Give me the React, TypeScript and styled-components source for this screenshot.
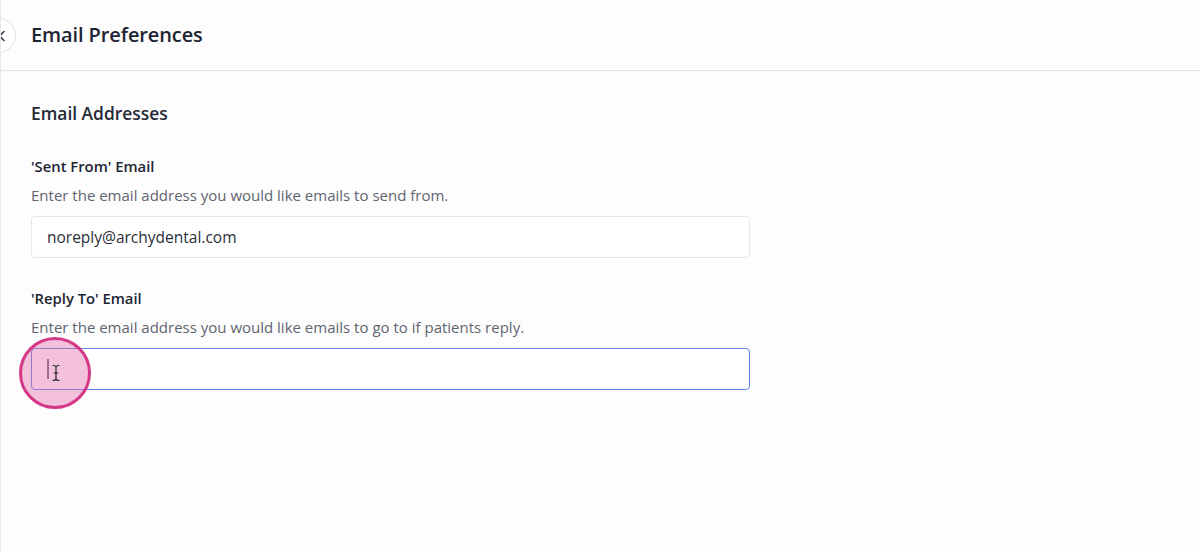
import React from "react";
import styled, { createGlobalStyle } from "styled-components";

const Global = createGlobalStyle`
  html, body { margin: 0; padding: 0; background: #fdfdfd; }
  body { font-family: "Open Sans", "Noto Sans", sans-serif; color: #1f2433; }
  * { box-sizing: border-box; }
`;

const Page = styled.div`
  width: 1200px;
  height: 551px;
  overflow: hidden;
  background: #fdfdfd;
  border-left: 1px solid #e6e7ea;
  display: flex;
  flex-direction: column;
  position: relative;
`;

const Header = styled.header`
  height: 71px;
  flex: none;
  display: flex;
  align-items: center;
  padding-left: 30px;
  border-bottom: 1px solid #e3e4e8;
  background: #fdfdfd;
  position: relative;
`;

const BackButton = styled.button`
  position: absolute;
  left: -20px;
  top: 18px;
  width: 35px;
  height: 35px;
  border-radius: 50%;
  border: 1px solid #dfe1e6;
  background: #ffffff;
  display: flex;
  align-items: center;
  justify-content: flex-end;
  padding: 0 8px 0 0;
  color: #3b3f4a;
`;

const Title = styled.h1`
  margin: 0;
  font-size: 20px;
  font-weight: 600;
  color: #1f2433;
  letter-spacing: -0.1px;
  margin-top: -2px;
`;

const Content = styled.main`
  padding: 30px 30px 0 30px;
  display: flex;
  flex-direction: column;
`;

const SectionTitle = styled.h2`
  margin: 0 0 31px 0;
  font-size: 17.4px;
  font-weight: 600;
  color: #252a36;
  line-height: 24px;
`;

const Field = styled.div`
  display: flex;
  flex-direction: column;
  margin-bottom: 30px;
`;

const Label = styled.label`
  font-size: 14.8px;
  font-weight: 600;
  color: #1f2433;
  line-height: 20px;
  margin-bottom: 9px;
`;

const Help = styled.p`
  margin: 0 0 10px 0;
  font-size: 15px;
  color: #5f6470;
  line-height: 21px;
`;

const InputBox = styled.div<{ $focused?: boolean }>`
  width: 719px;
  height: 42px;
  border-radius: 4px;
  border: 1px solid ${(p) => (p.$focused ? "#5c88e6" : "#e6e7eb")};
  background: #ffffff;
  display: flex;
  align-items: center;
  padding-left: 15px;
  font-size: 15.5px;
  color: #2a2e38;
  position: relative;
`;

const Caret = styled.span`
  width: 1.5px;
  height: 20px;
  background: #7a6f88;
  display: block;
`;

const ClickRing = styled.div`
  position: absolute;
  left: 18px;
  top: 337px;
  width: 72px;
  height: 72px;
  border-radius: 50%;
  border: 3.5px solid #d63888;
  background: rgba(224, 100, 166, 0.4);
  pointer-events: none;
`;

const Beam = styled.svg`
  position: absolute;
  left: 50px;
  top: 364px;
  pointer-events: none;
`;

export default function App() {
  return (
    <>
      <Global />
      <Page>
        <Header>
          <BackButton aria-label="Back">
            <svg width="10" height="12" viewBox="0 0 10 12" fill="none">
              <path d="M7 1.5 L2.5 6 L7 10.5" stroke="#3b3f4a" strokeWidth="1.6" strokeLinecap="round" strokeLinejoin="round" />
            </svg>
          </BackButton>
          <Title>Email Preferences</Title>
        </Header>
        <Content>
          <SectionTitle>Email Addresses</SectionTitle>
          <Field>
            <Label>'Sent From' Email</Label>
            <Help>Enter the email address you would like emails to send from.</Help>
            <InputBox>noreply@archydental.com</InputBox>
          </Field>
          <Field>
            <Label>'Reply To' Email</Label>
            <Help>Enter the email address you would like emails to go to if patients reply.</Help>
            <InputBox $focused>
              <Caret />
            </InputBox>
          </Field>
        </Content>
        <ClickRing />
        <Beam width="10" height="18" viewBox="0 0 10 18" fill="none">
          <path d="M2 1.5 C4 1.5 5 2 5 3.5 L5 14.5 C5 16 4 16.5 2 16.5 M8 1.5 C6 1.5 5 2 5 3.5 M5 14.5 C5 16 6 16.5 8 16.5 M3 9 L7 9" stroke="#2a2a2a" strokeWidth="1.2" strokeLinecap="round" />
        </Beam>
      </Page>
    </>
  );
}
